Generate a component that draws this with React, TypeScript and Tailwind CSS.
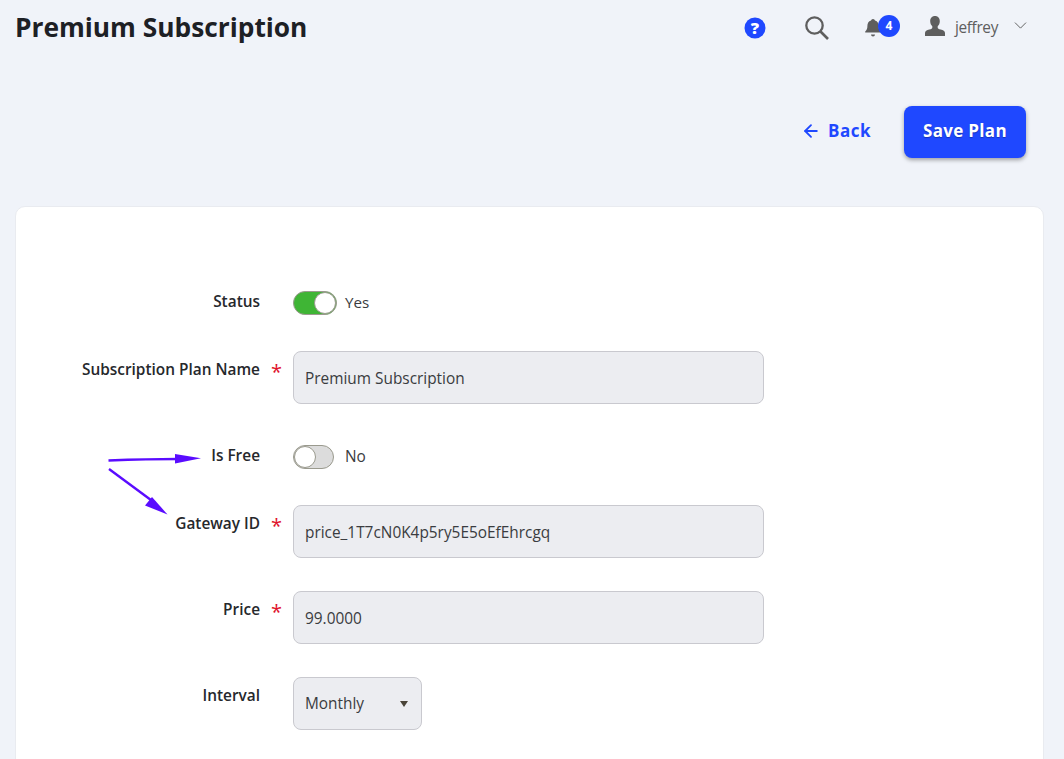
import React from "react";
import { ArrowLeft, ChevronDown } from "lucide-react";

const font = "font-['Open_Sans','Noto_Sans',sans-serif]";

function Row({ label, required, className, labelClass, children }: { label: string; required?: boolean; className: string; labelClass?: string; children: React.ReactNode }) {
  return (
    <div className={`flex items-start ${className}`}>
      <div className={`w-[223px] text-right text-[15.4px] leading-[20px] font-semibold text-[#26282c] shrink-0 ${labelClass ?? ""}`}>{label}</div>
      <div className={`w-[33px] shrink-0 pl-[11px] text-[20px] leading-[24px] text-[#e0112b] font-medium ${labelClass ?? ""}`}>{required ? "*" : ""}</div>
      {children}
    </div>
  );
}

function Field({ value }: { value: string }) {
  return (
    <div className="w-[471px] h-[53px] rounded-[8px] border border-[#c9c9cf] bg-[#ecedf1] px-[11px] flex items-center text-[15.4px] text-[#3a3c40] pt-[3px]">
      {value}
    </div>
  );
}

export default function App() {
  return (
    <div className={`${font} w-[1064px] h-[759px] overflow-hidden bg-[#f0f3f9] px-[15px] relative`}>
      <header className="h-[55px] flex items-center">
        <h1 className="text-[26.3px] font-bold text-[#1d2025] leading-none">Premium Subscription</h1>
        <div className="ml-auto flex items-center text-[#5e5e5e] pr-[10px]">
          <svg width="22" height="22" viewBox="0 0 22 22" className="mr-[38px]">
            <circle cx="11" cy="11" r="10.5" fill="#1f48ff" />
            <text x="11" y="16.8" textAnchor="middle" fontSize="16.5" fontWeight="800" fill="#fff" fontFamily="Open Sans">?</text>
          </svg>
          <svg width="25" height="25" viewBox="0 0 25 25" fill="none" stroke="#5e5e5e" className="mr-[35px]">
            <circle cx="10.500" cy="10.500" r="8.200" strokeWidth="2.300" />
            <path d="M16.500 16.500L24 24" strokeWidth="2.600" />
          </svg>
          <div className="relative w-[36px] h-[24px] mr-[24px]">
            <svg width="18" height="20" viewBox="0 0 18 20" className="absolute left-0 top-[2px]">
              <path d="M9 1a2 2 0 0 1 2 1.600c2.600.8 3.600 3 3.600 5.400 0 3 .8 4 2.200 5.400v1H1.200v-1C2.600 12 3.400 11 3.400 8c0-2.400 1-4.600 3.600-5.400A2 2 0 0 1 9 1z" fill="#5e5e5e" />
              <path d="M7 16.500h4a2 2 0 0 1-4 0z" fill="#5e5e5e" />
            </svg>
            <span className="absolute left-[14px] top-[-1px] w-[22px] h-[22px] rounded-full bg-[#1f48ff] text-white text-[12px] font-bold flex items-center justify-center">4</span>
          </div>
          <svg width="22" height="20" viewBox="0 0 22 20" className="mr-[9px] -mt-[4px]">
            <path d="M11 0c3 0 4.800 2.200 4.800 5.200 0 2.200-.9 4-2.100 5v1.600c0 .8 1 1.200 3 1.800 2.600.8 4.300 1.600 4.300 3.400V20H1v-3c0-1.800 1.700-2.600 4.300-3.400 2-.6 3-1 3-1.800v-1.600c-1.200-1-2.100-2.800-2.100-5C6.200 2.200 8 0 11 0z" fill="#5e5e5e" />
          </svg>
          <span className="text-[15.4px] tracking-[-0.35px] text-[#5e5e5e] mr-[12px]">jeffrey</span>
          <ChevronDown size={21} strokeWidth={1.100} className="mr-[8px] -mt-[4px]" />
        </div>
      </header>

      <div className="h-[151px] pt-[51px] pr-[23px] flex items-start justify-end">
        <a className="flex items-center h-[52px] -mt-[1px] text-[#1f48ff] text-[17px] font-bold tracking-[0.5px] mr-[33px]">
          <ArrowLeft size={20} strokeWidth={2.200} className="mr-[7px]" />
          Back
        </a>
        <button className="w-[122px] h-[52px] rounded-[8px] bg-[#1f48ff] text-white text-[17px] font-bold tracking-[0.3px] shadow-[0_2px_4px_rgba(0,0,0,0.35)] [text-shadow:0_1px_1px_rgba(0,0,0,0.3)] pb-[2px]">
          Save Plan
        </button>
      </div>

      <main className="w-[1029px] h-[600px] rounded-[10px] bg-white border border-[#e9ebf0] pt-[84px] pl-[21px]">
        <Row label="Status" labelClass="pt-[1px]" className="h-[24px] mb-[36px]">
          <div className="flex items-center">
            <div className="relative w-[44px] h-[24px] rounded-full bg-[#3fb535] border border-[#9a9a8e]">
              <span className="absolute right-0 top-0 w-[22px] h-[22px] rounded-full bg-white border border-[#9a9a8e]" />
            </div>
            <span className="ml-[8px] -mt-[2px] text-[15.2px] text-[#3a3c40]">Yes</span>
          </div>
        </Row>
        <Row label="Subscription Plan Name" required labelClass="pt-[9px]" className="h-[53px] mb-[41px]">
          <Field value="Premium Subscription" />
        </Row>
        <Row label="Is Free" labelClass="pt-[1px]" className="h-[24px] mb-[36px]">
          <div className="flex items-center">
            <div className="relative w-[41px] h-[24px] rounded-full bg-[#dcdcdc] border border-[#9a9a8e]">
              <span className="absolute left-0 top-0 w-[22px] h-[22px] rounded-full bg-white border border-[#9a9a8e]" />
            </div>
            <span className="ml-[11px] text-[15.4px] text-[#3a3c40]">No</span>
          </div>
        </Row>
        <Row label="Gateway ID" required labelClass="pt-[9px]" className="h-[53px] mb-[33px]">
          <Field value="price_1T7cN0K4p5ry5E5oEfEhrcgq" />
        </Row>
        <Row label="Price" required labelClass="pt-[9px]" className="h-[53px] mb-[33px]">
          <Field value="99.0000" />
        </Row>
        <Row label="Interval" labelClass="pt-[9px]" className="h-[53px]">
          <div className="w-[129px] h-[53px] rounded-[8px] border border-[#c9c9cf] bg-[#ecedf1] px-[11px] flex items-center justify-between text-[15.4px] text-[#3a3c40] pt-[1px]">
            Monthly
            <span className="w-0 h-0 border-l-[4.500px] border-r-[4.500px] border-t-[6px] border-l-transparent border-r-transparent border-t-[#4a4438] mr-[2px] -mt-[1px]" />
          </div>
        </Row>
      </main>

      <svg width="110" height="80" viewBox="0 0 110 80" className="absolute left-[100px] top-[448px]">
        <path d="M8.500 12.500C35 11.500 60 11 78 11" stroke="#5a0cff" strokeWidth="2.400" fill="none" />
        <path d="M75 6L101 10.300L75 15.500z" fill="#5a0cff" />
        <path d="M9 21L55 55" stroke="#5a0cff" strokeWidth="2.400" fill="none" />
        <path d="M52 49L67.500 66.500L45 57.500z" fill="#5a0cff" />
      </svg>
    </div>
  );
}
